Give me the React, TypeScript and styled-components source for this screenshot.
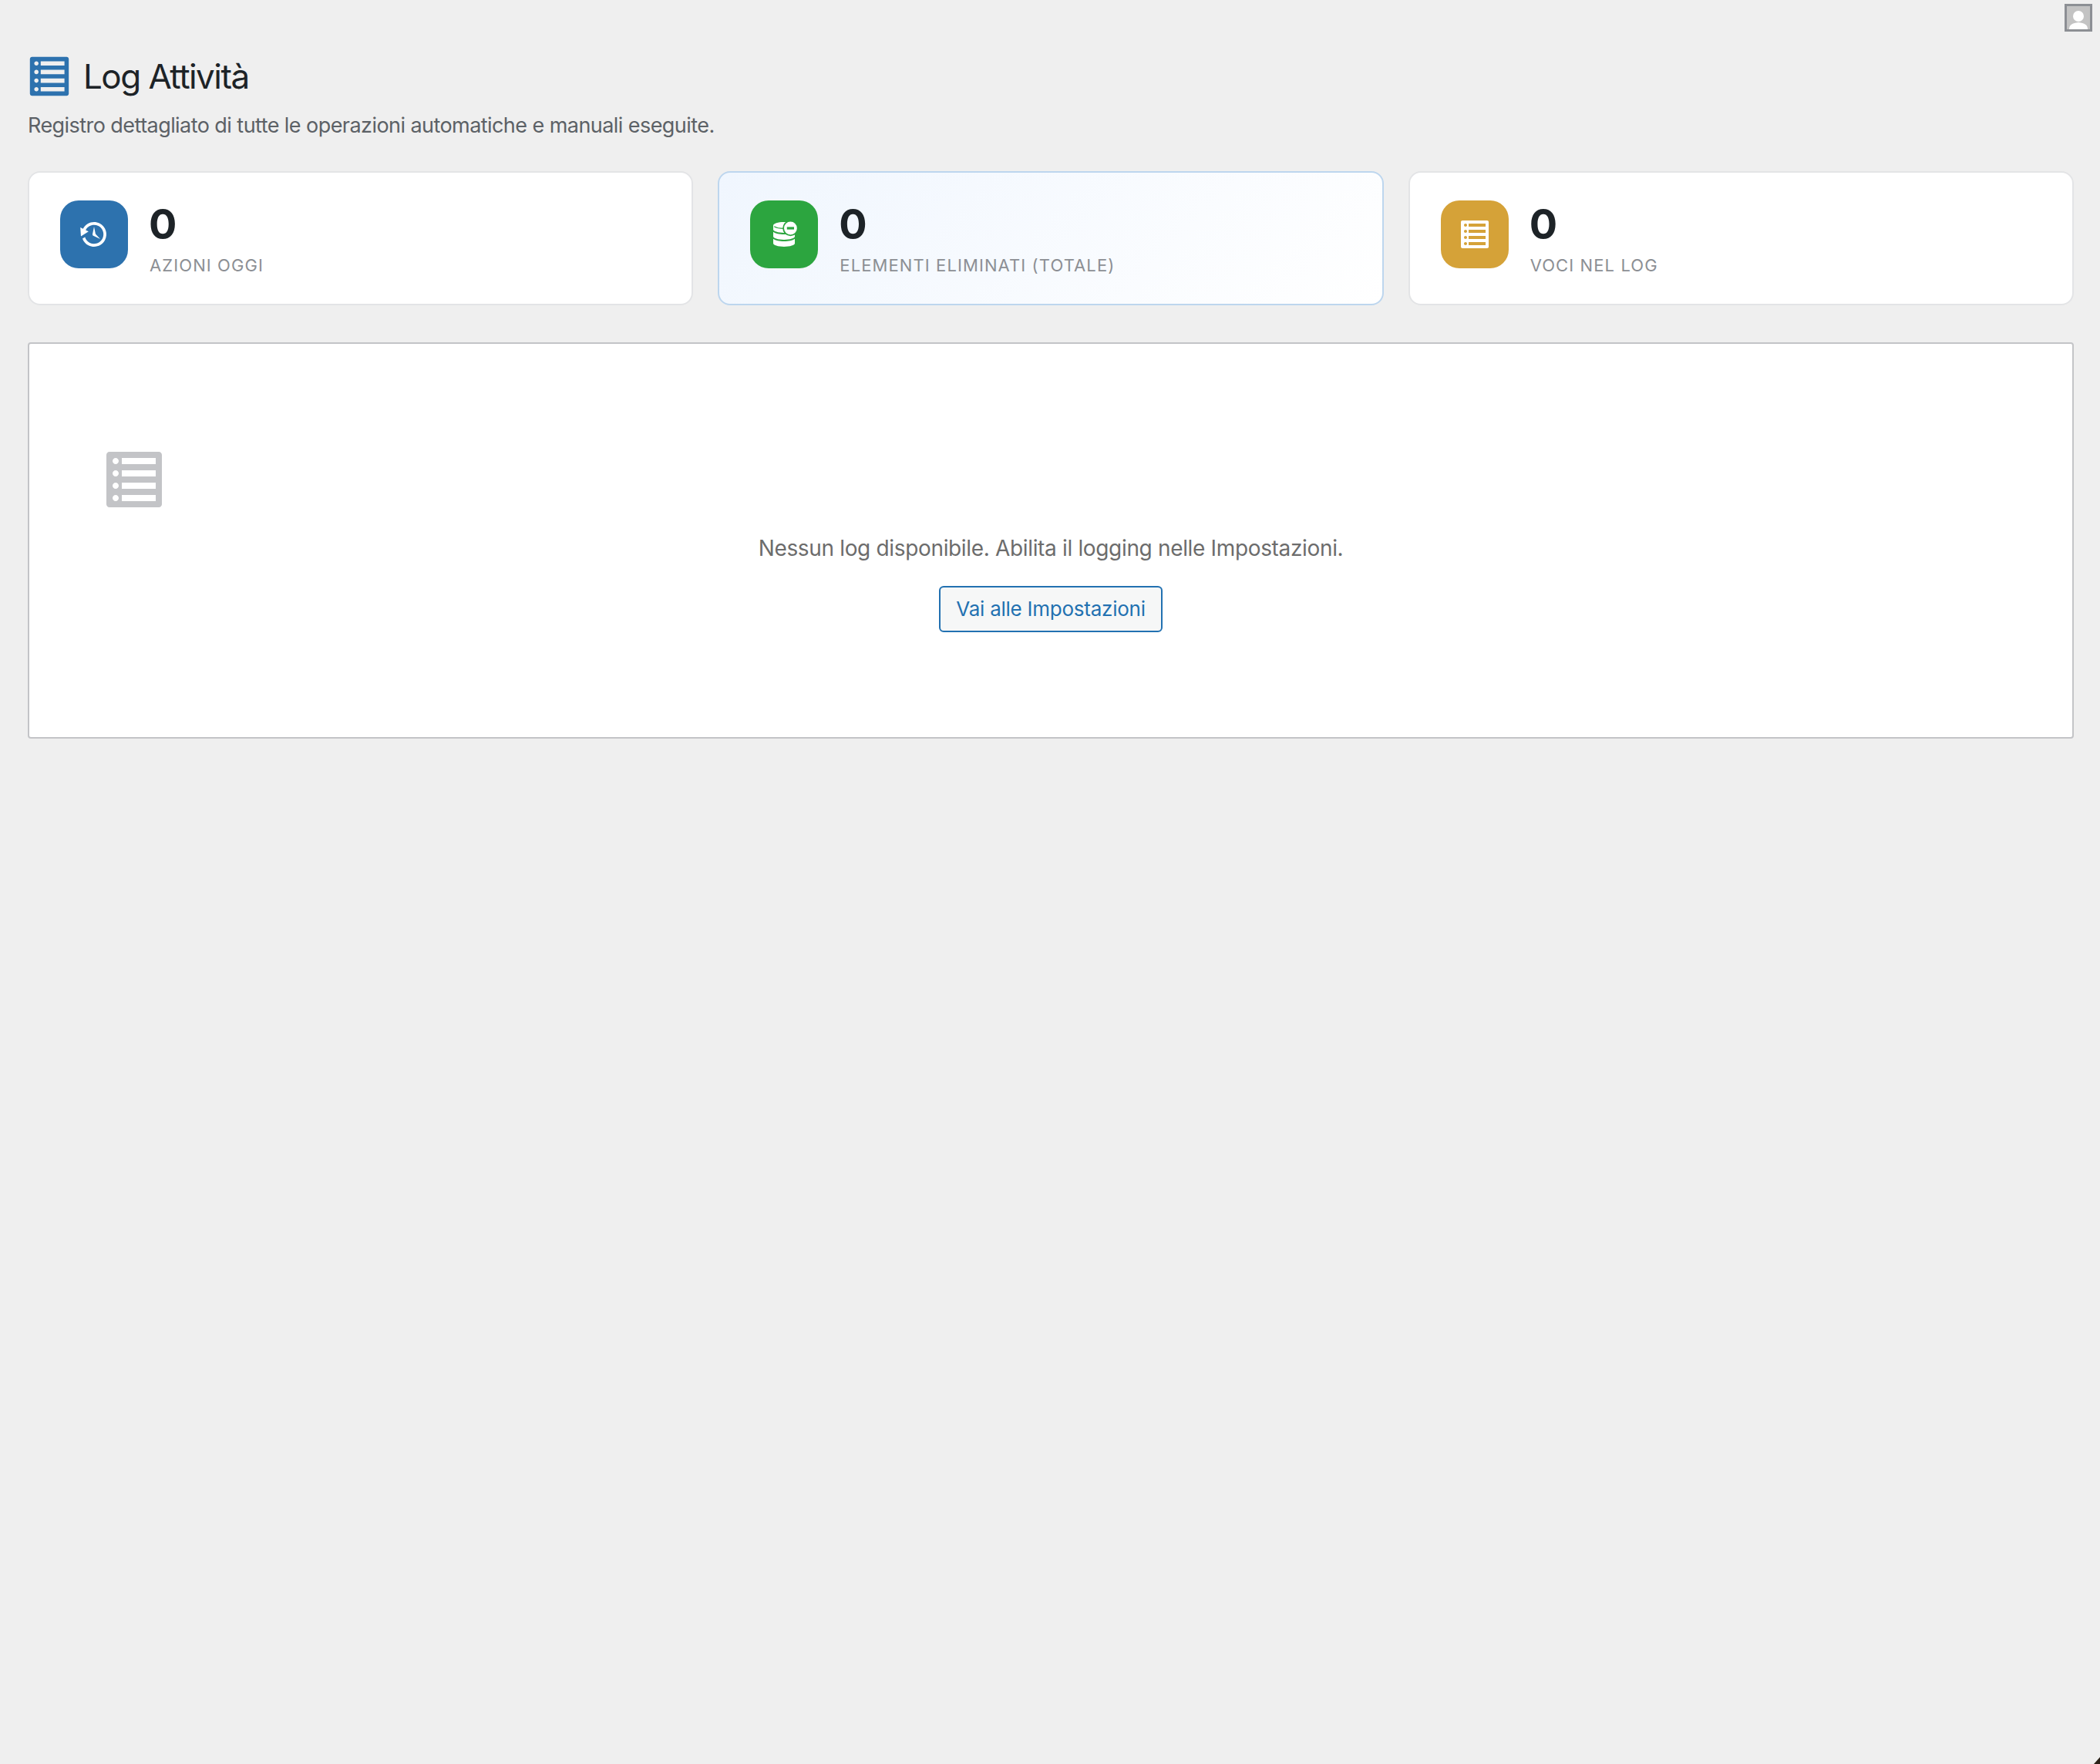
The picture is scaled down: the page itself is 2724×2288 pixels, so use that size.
import React from 'react'
import styled, { createGlobalStyle } from 'styled-components'

const GlobalStyle = createGlobalStyle`
  html, body {
    margin: 0;
    padding: 0;
    background: #efefef;
    font-family: Inter, "Noto Sans", sans-serif;
  }
`

const Page = styled.div`
  min-height: 2288px;
  box-sizing: border-box;
  padding: 0 34px 0 36px;
`

const TopBar = styled.div`
  display: flex;
  justify-content: flex-end;
  height: 74px;
  padding: 5px 0 0;
  box-sizing: border-box;
  margin-right: -24px;
`

const Avatar = styled.div`
  width: 36px;
  height: 36px;
  box-sizing: border-box;
  border: 3px solid #8c8f94;
  background: #c3c3c3;
  overflow: hidden;

  svg {
    display: block;
  }
`

const TitleRow = styled.div`
  display: flex;
  align-items: center;
  gap: 16px;
  height: 50px;
`

const Title = styled.h1`
  margin: 0;
  font-size: 44px;
  line-height: 50px;
  letter-spacing: -1.55px;
  font-weight: 400;
  color: #1d2327;
`

const Subtitle = styled.p`
  margin: 20px 0 0;
  font-size: 27px;
  line-height: 38px;
  letter-spacing: -0.56px;
  color: #5c6166;
`

const Stats = styled.div`
  display: grid;
  grid-template-columns: repeat(3, 1fr);
  gap: 32px;
  margin-top: 40px;
`

const StatCard = styled.div<{ $highlight?: boolean }>`
  display: flex;
  gap: 28px;
  height: 174px;
  box-sizing: border-box;
  padding: 36px 40px;
  border: 2px solid ${(p) => (p.$highlight ? '#bdd6ee' : '#e3e4e6')};
  border-radius: 16px;
  background: ${(p) => (p.$highlight ? 'linear-gradient(135deg, #f0f6fe 0%, #ffffff 100%)' : '#ffffff')};
`

const StatIcon = styled.div<{ $color: string }>`
  display: flex;
  align-items: center;
  justify-content: center;
  flex: none;
  width: 88px;
  height: 88px;
  border-radius: 24px;
  background: ${(p) => p.$color};
`

const StatBody = styled.div`
  display: flex;
  flex-direction: column;
`

const StatValue = styled.div`
  margin: 1px 0 0 -1px;
  font-size: 54px;
  line-height: 60px;
  font-weight: 700;
  color: #1d2327;
`

const StatLabel = styled.div`
  margin-top: 7px;
  font-size: 22px;
  line-height: 32px;
  letter-spacing: 1.1px;
  text-transform: uppercase;
  color: #8c8f94;
`

const EmptyBox = styled.div`
  height: 514px;
  box-sizing: border-box;
  margin-top: 48px;
  padding: 140px 96px 0;
  border: 2px solid #c3c4c7;
  border-radius: 4px;
  background: #ffffff;
  text-align: center;
`

const EmptyIcon = styled.div`
  height: 109px;
  text-align: left;

  svg {
    display: block;
    margin-top: -4px;
  }
`

const EmptyText = styled.p`
  margin: 0;
  font-size: 28px;
  line-height: 40px;
  letter-spacing: -0.34px;
  color: #6c6c6c;
`

const Button = styled.a`
  display: inline-block;
  margin-top: 29px;
  padding: 0 20px;
  height: 60px;
  box-sizing: border-box;
  border: 2px solid #2271b1;
  border-radius: 6px;
  background: #f6f7f7;
  color: #2271b1;
  font-size: 26px;
  line-height: 56px;
  letter-spacing: -0.25px;
`

const ResizeCorner = styled.div`
  position: fixed;
  right: 0;
  bottom: 0;
  width: 8px;
  height: 9px;
  background: #2a2118;
  clip-path: polygon(100% 0, 100% 100%, 0 100%);
`

const LIST_VIEW =
  'M2 19h16c.55 0 1-.45 1-1V2c0-.55-.45-1-1-1H2c-.55 0-1 .45-1 1v16c0 .55.45 1 1 1zM4 3c.55 0 1 .45 1 1s-.45 1-1 1-1-.45-1-1 .45-1 1-1zm13 0v2H6V3h11zM4 7c.55 0 1 .45 1 1s-.45 1-1 1-1-.45-1-1 .45-1 1-1zm13 0v2H6V7h11zM4 11c.55 0 1 .45 1 1s-.45 1-1 1-1-.45-1-1 .45-1 1-1zm13 0v2H6v-2h11zM4 15c.55 0 1 .45 1 1s-.45 1-1 1-1-.45-1-1 .45-1 1-1zm13 0v2H6v-2h11z'

const BACKUP =
  'M13.65 2.88c3.93 2.01 5.48 6.84 3.47 10.77s-6.83 5.48-10.77 3.47c-1.87-.96-3.2-2.56-3.86-4.4l1.64-1.03c.45 1.57 1.52 2.95 3.08 3.76 3.01 1.54 6.69.35 8.23-2.66 1.55-3.01.36-6.69-2.65-8.24C9.78 3.01 6.1 4.2 4.56 7.21l1.88.97-4.95 3.08-.39-5.82 1.78.91C4.89 2.42 9.73.87 13.65 2.88zm-4.36 7.83C9.11 10.53 9 10.28 9 10c0-.07.03-.12.04-.19h-.01L10 5l.97 4.81L14 13l-4.5-2.12.02-.02c-.08-.04-.16-.09-.23-.15z'

const ListIcon = ({ size, color }: { size: number; color: string }) => (
  <svg width={size} height={size} viewBox="0 0 20 20" fill={color} fillRule="evenodd">
    <path d={LIST_VIEW} />
  </svg>
)

const BackupIcon = () => (
  <svg width={40} height={40} viewBox="0 0 20 20" fill="#fff">
    <path d={BACKUP} />
  </svg>
)

const DatabaseRemoveIcon = () => (
  <svg width={40} height={40} viewBox="0 0 20 20" fill="#fff">
    <path d="M3 4.2C3 3 6 2 10 2s7 1 7 2.2v2.6C17 8 14 9 10 9S3 8 3 6.8z" />
    <path d="M3 8.4C4.4 9.5 7 10 10 10s5.6-.5 7-1.6v2.9c0 1.2-3 2.2-7 2.2s-7-1-7-2.2z" />
    <path d="M3 12.9c1.4 1.1 4 1.6 7 1.6s5.6-.5 7-1.6v2.9c0 1.2-3 2.2-7 2.2s-7-1-7-2.2z" />
    <path d="M3.6 4.9C5 5.8 7.4 6.2 10 6.2" fill="none" stroke="#2ca53f" strokeWidth=".6" />
    <circle cx="14.2" cy="6" r="5.1" fill="#2ca53f" />
    <circle cx="14.2" cy="6" r="4.2" />
    <rect x="11.9" y="5.2" width="4.6" height="1.6" fill="#2ca53f" />
  </svg>
)

const AvatarIcon = () => (
  <svg width={30} height={30} viewBox="0 0 30 30" fill="#fff">
    <circle cx="15" cy="13" r="7" />
    <path d="M3 30c0-6 4-8 12-9 8 1 12 3 12 9z" />
  </svg>
)

const stats = [
  { label: 'Azioni oggi', color: '#2d72ae', icon: <BackupIcon /> },
  { label: 'Elementi eliminati (totale)', color: '#2ca53f', icon: <DatabaseRemoveIcon />, highlight: true },
  { label: 'Voci nel log', color: '#d5a238', icon: <ListIcon size={40} color="#fff" /> },
]

const App = () => (
  <Page>
    <GlobalStyle />
    <TopBar>
      <Avatar>
        <AvatarIcon />
      </Avatar>
    </TopBar>
    <TitleRow>
      <ListIcon size={56} color="#2d72ae" />
      <Title>Log Attività</Title>
    </TitleRow>
    <Subtitle>Registro dettagliato di tutte le operazioni automatiche e manuali eseguite.</Subtitle>
    <Stats>
      {stats.map((stat) => (
        <StatCard key={stat.label} $highlight={stat.highlight}>
          <StatIcon $color={stat.color}>{stat.icon}</StatIcon>
          <StatBody>
            <StatValue>0</StatValue>
            <StatLabel>{stat.label}</StatLabel>
          </StatBody>
        </StatCard>
      ))}
    </Stats>
    <EmptyBox>
      <EmptyIcon>
        <ListIcon size={80} color="#c3c4c7" />
      </EmptyIcon>
      <EmptyText>Nessun log disponibile. Abilita il logging nelle Impostazioni.</EmptyText>
      <Button>Vai alle Impostazioni</Button>
    </EmptyBox>
    <ResizeCorner />
  </Page>
)

export default App
